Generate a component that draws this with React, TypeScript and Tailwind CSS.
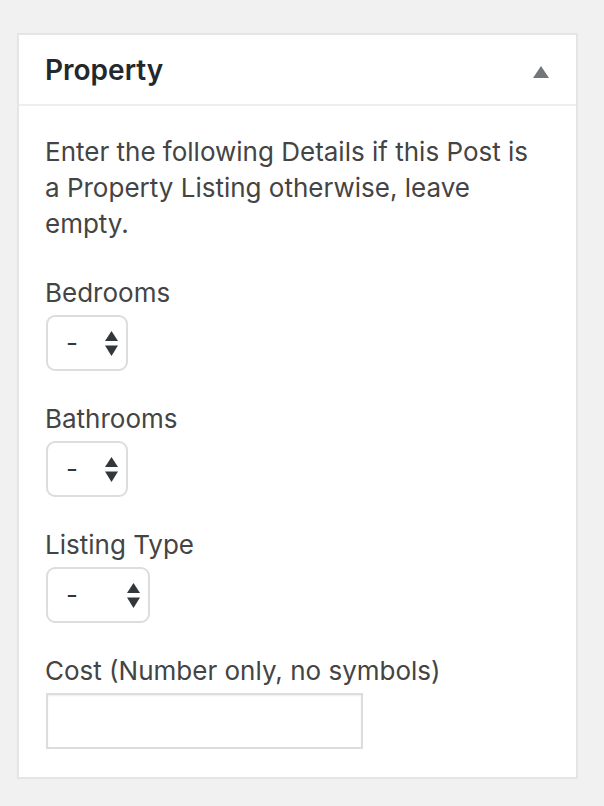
import React from 'react';

const Arrows: React.FC = () => (
  <svg width="13" height="25" viewBox="0 0 13 25" className="text-[#32373c]">
    <path d="M6.5 0 L13 10 L0 10 Z" fill="currentColor" />
    <path d="M0 14.5 L13 14.5 L6.5 25 Z" fill="currentColor" />
  </svg>
);

const Select: React.FC<{ width: string }> = ({ width }) => (
  <div className={`${width} h-[56px] mt-[4px] ml-[1px] flex items-center justify-between pl-[18px] pr-[8px] bg-white border-2 border-[#dddddd] rounded-[9px]`}>
    <span className="text-[26px] leading-none text-[#32373c]">-</span>
    <Arrows />
  </div>
);

const fields = [
  { label: 'Bedrooms', width: 'w-[82px]' },
  { label: 'Bathrooms', width: 'w-[82px]' },
  { label: 'Listing Type', width: 'w-[104px]' },
];

export default function App() {
  return (
    <div className="min-h-[806px] bg-[#f1f1f1] pt-[33px] pl-[17px] pr-[26px] font-['Inter',sans-serif]">
      <div className="bg-white border-2 border-[#e5e5e5]">
        <div className="h-[71px] flex items-center justify-between pl-[26px] pr-[27px] border-b-2 border-[#eeeeee]">
          <h2 className="text-[28px] font-semibold text-[#23282d]">Property</h2>
          <svg width="16" height="12" viewBox="0 0 16 12" className="mt-[5px]">
            <path d="M8 0 L16 12 L0 12 Z" fill="#72777c" />
          </svg>
        </div>
        <div className="px-[26px] pt-[28px] pb-[28px] text-[#444444] text-[26px] leading-[36px]">
          <p className="pr-[14px]">Enter the following Details if this Post is a Property Listing otherwise, leave empty.</p>
          {fields.map((f, i) => (
            <div key={f.label} className={i === 0 ? 'mt-[33px]' : 'mt-[30px]'}>
              <label className="block">{f.label}</label>
              <Select width={f.width} />
            </div>
          ))}
          <div className="mt-[30px]">
            <label className="block">Cost (Number only, no symbols)</label>
            <div className="w-[317px] h-[56px] mt-[4px] ml-[1px] border-2 border-[#dddddd] shadow-[inset_0_1px_2px_rgba(0,0,0,0.07)]" />
          </div>
        </div>
      </div>
    </div>
  );
}
